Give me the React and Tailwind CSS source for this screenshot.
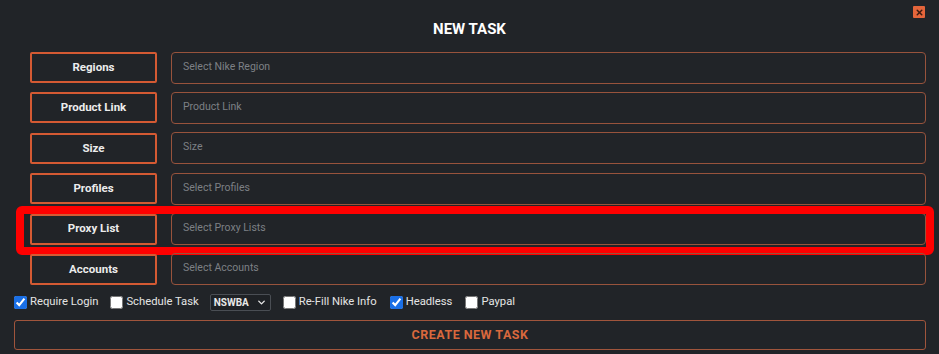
import React from 'react';
import { ChevronDown, X } from 'lucide-react';

const rows = [
  { label: 'Regions', placeholder: 'Select Nike Region' },
  { label: 'Product Link', placeholder: 'Product Link' },
  { label: 'Size', placeholder: 'Size' },
  { label: 'Profiles', placeholder: 'Select Profiles' },
  { label: 'Proxy List', placeholder: 'Select Proxy Lists', highlight: true },
  { label: 'Accounts', placeholder: 'Select Accounts' },
];

const options = [
  { label: 'Require Login', checked: true },
  { label: 'Schedule Task', checked: false, select: true },
  { label: 'Re-Fill Nike Info', checked: false },
  { label: 'Headless', checked: true },
  { label: 'Paypal', checked: false },
];

function Check({ checked, label }) {
  return (
    <label className="flex items-center gap-[3px]">
      <input type="checkbox" defaultChecked={checked} className="w-[13px] h-[13px] m-0 accent-[#1a6fe6]" />
      <span className="text-[11.25px] text-[#e4e4e4]">{label}</span>
    </label>
  );
}

export default function App() {
  return (
    <div className="w-[939px] h-[354px] bg-[#212428] relative overflow-hidden" style={{ fontFamily: 'Roboto, "Liberation Sans", sans-serif' }}>
      {/* close button */}
      <button className="absolute right-[14px] top-[6px] w-[12px] h-[12px] bg-[#e4653b] rounded-[1px] flex items-center justify-center">
        <X className="w-[9px] h-[9px] text-[#3a1a10]" strokeWidth={4} />
      </button>

      <h1 className="text-center text-white font-bold text-[15px] pt-[18px] h-[52px]">NEW TASK</h1>

      {/* form rows */}
      <div className="flex flex-col gap-[9.4px] pl-[30px] pr-[13px]">
        {rows.map(row => (
          <div key={row.label} className="relative flex items-center gap-[14px] h-[31px]">
            <div className="w-[127px] h-[31px] shrink-0 border-2 border-[#d45a33] rounded-[2px] flex items-center justify-center text-[11.5px] font-bold text-[#ececec]">
              {row.label}
            </div>
            <div className="flex-1 h-[32px] border-[1.5px] border-[#98533c] rounded-[4px] pl-[11px] pt-[6px] text-[10.5px] text-[#7d8085]">
              {row.placeholder}
            </div>
            {row.highlight && (
              <div className="absolute -left-[14px] -top-[8px] -right-[8px] -bottom-[10px] border-[8px] border-[#ff0000] rounded-[6px] pointer-events-none" />
            )}
          </div>
        ))}
      </div>

      {/* options */}
      <div className="flex items-center pl-[14px] mt-[10px] h-[15px]">
        <Check {...options[0]} />
        <div className="ml-[12px]"><Check {...options[1]} /></div>
        <div className="ml-[11px] h-[17px] w-[61px] border border-[#4a4e54] rounded-[2px] bg-[#1e2125] flex items-center justify-between px-[3px] text-[10px] font-bold text-[#e8e8e8]">
          NSWBA
          <ChevronDown className="w-[11px] h-[11px]" strokeWidth={3} />
        </div>
        <div className="ml-[12px]"><Check {...options[2]} /></div>
        <div className="ml-[13px]"><Check {...options[3]} /></div>
        <div className="ml-[13px]"><Check {...options[4]} /></div>
      </div>

      {/* create button */}
      <div className="pl-[14px] pr-[13px] mt-[10px]">
        <button className="w-full h-[30px] border-[1.5px] border-[#a0553c] rounded-[3px] text-[12.5px] font-bold tracking-[0.5px] text-[#d9683d]">
          CREATE NEW TASK
        </button>
      </div>
    </div>
  );
}
